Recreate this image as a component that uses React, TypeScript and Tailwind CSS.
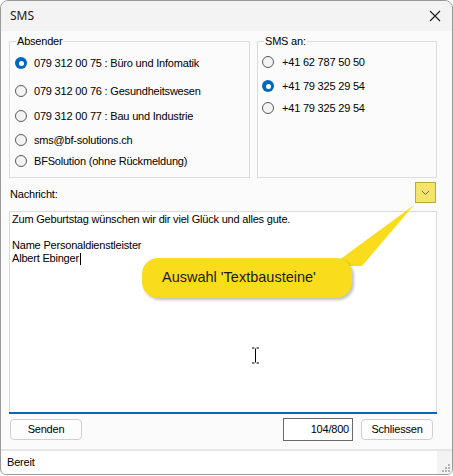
import React from "react";

const F = { fontFamily: '"Liberation Sans", Arial, sans-serif' };

function Radio({ checked }: { checked?: boolean }) {
  if (checked)
    return (
      <span className="w-[12px] h-[12px] rounded-full bg-[#0067c0] flex items-center justify-center shrink-0">
        <span className="w-[5px] h-[5px] rounded-full bg-white" />
      </span>
    );
  return <span className="w-[12px] h-[12px] rounded-full border border-[#5a5a5a] bg-[#f3f3f3] shrink-0 box-border" />;
}

function Item({ label, checked, mt, gap }: { label: string; checked?: boolean; mt: string; gap: string }) {
  return (
    <div className={`h-[20px] flex items-center ${mt} ${gap}`}>
      <Radio checked={checked} />
      <span className="text-[11px] tracking-[-0.2px] text-black whitespace-nowrap">{label}</span>
    </div>
  );
}

export default function App() {
  return (
    <div className="w-[453px] h-[476px] bg-white relative overflow-hidden text-black" style={F}>
      <div className="w-[453px] h-[475px] flex flex-col border border-[#9a9a9a] rounded-t-[8px] rounded-b-[6px] overflow-hidden bg-[#fbfbfb]">
        {/* title bar */}
        <div className="h-[30px] bg-[#f3f3f3] flex items-center justify-between pl-[9px] pr-[10px] shrink-0">
          <span className="text-[12px] text-[#1a1a1a]" style={{ fontFamily: '"Noto Sans", "Open Sans", sans-serif' }}>
            SMS
          </span>
          <svg width="12" height="12" viewBox="0 0 12 12" className="mr-[1px]">
            <path d="M1 1 L11 11 M11 1 L1 11" stroke="#1a1a1a" strokeWidth="1.1" />
          </svg>
        </div>

        {/* body */}
        <div className="flex-1 flex flex-col pl-[8px] pr-[15px]">
          <div className="flex gap-[7px] mt-[4px]">
            <fieldset className="w-[241px] h-[143px] border border-[#dcdcdc] px-[6px]">
              <legend className="px-[1px] text-[11px] leading-[13px] tracking-[-0.2px]">Absender</legend>
              <div className="-ml-[1px] pt-[5px]">
                <Item label="079 312 00 75 : Büro und Infomatik" checked mt="mt-0" gap="gap-[7px]" />
                <Item label="079 312 00 76 : Gesundheitswesen" mt="mt-[8px]" gap="gap-[7px]" />
                <Item label="079 312 00 77 : Bau und Industrie" mt="mt-[5px]" gap="gap-[7px]" />
                <Item label="sms@bf-solutions.ch" mt="mt-[4px]" gap="gap-[7px]" />
                <Item label="BFSolution (ohne Rückmeldung)" mt="mt-[1px]" gap="gap-[7px]" />
              </div>
            </fieldset>
            <fieldset className="w-[180px] h-[143px] border border-[#dcdcdc] px-[6px]">
              <legend className="px-[1px] text-[11px] leading-[13px] tracking-[-0.2px]">SMS an:</legend>
              <div className="-ml-[2px] pt-[4px]">
                <Item label="+41 62 787 50 50" mt="mt-0" gap="gap-[8px]" />
                <Item label="+41 79 325 29 54" checked mt="mt-[4px]" gap="gap-[8px]" />
                <Item label="+41 79 325 29 54" mt="mt-[2px]" gap="gap-[8px]" />
              </div>
            </fieldset>
          </div>

          {/* Nachricht row */}
          <div className="h-[21px] mt-[4px] flex items-center justify-between">
            <span className="text-[11px] tracking-[-0.2px] pt-[3px] pl-[1px]">Nachricht:</span>
            <div className="w-[21px] h-[21px] mr-[1px] border border-[#b8a844] bg-[#f5e46c] flex items-center justify-center">
              <svg width="9" height="6" viewBox="0 0 9 6">
                <path d="M1 1 L4.5 4.5 L8 1" stroke="#6b6b4a" strokeWidth="1" fill="none" />
              </svg>
            </div>
          </div>

          {/* textarea */}
          <div className="mt-[8px] h-[203px] border border-[#dcdcdc] border-b-0 bg-white flex flex-col">
            <div className="flex-1 px-[2px] pt-[1px] text-[11px] leading-[13px] tracking-[-0.2px]">
              <div>Zum Geburtstag wünschen wir dir viel Glück und alles gute.</div>
              <div className="h-[13px]" />
              <div>Name Personaldienstleister</div>
              <div className="flex items-center">
                Albert Ebinger<span className="inline-block w-[1px] h-[12px] bg-black ml-[1px]" />
              </div>
            </div>
            <div className="h-[2px] bg-[#0067c0] -mx-[1px]" />
          </div>

          {/* bottom buttons */}
          <div className="flex items-center mt-[4px] h-[23px]">
            <button className="ml-[1px] w-[72px] h-[21px] rounded-[4px] border border-[#d0d0d0] bg-[#fdfdfd] text-[11px] tracking-[-0.2px]">
              Senden
            </button>
            <div className="ml-auto w-[70px] h-[23px] border border-[#6a6a6a] bg-white flex items-center justify-end pr-[3px] text-[11px] tracking-[-0.2px]">
              104/800
            </div>
            <button className="ml-[8px] mr-[4px] w-[72px] h-[21px] rounded-[4px] border border-[#d0d0d0] bg-[#fdfdfd] text-[11px] tracking-[-0.2px]">
              Schliessen
            </button>
          </div>
        </div>

        {/* status bar */}
        <div className="h-[25px] border-t-[2px] border-[#e6e6e6] flex shrink-0">
          <div className="flex-1 bg-white flex items-center pl-[4px] text-[11px] tracking-[-0.2px] ml-[2px]">Bereit</div>
          <div className="w-[15px] bg-[#f3f3f3] relative">
            <svg width="12" height="12" viewBox="0 0 12 12" className="absolute right-[1px] bottom-[1px]">
              {[
                [9, 1],
                [6, 4],
                [9, 4],
                [3, 7],
                [6, 7],
                [9, 7],
              ].map(([x, y], i) => (
                <rect key={i} x={x} y={y + 2} width="2" height="2" fill="#b4b4b4" />
              ))}
            </svg>
          </div>
        </div>
      </div>

      {/* callout tail */}
      <svg className="absolute left-0 top-0 pointer-events-none" width="453" height="476">
        <polygon points="414,205 331,266 362,266" fill="#f9dd1d" />
      </svg>
      {/* callout bubble */}
      <div className="absolute left-[142px] top-[258px] w-[210px] h-[40px] rounded-[16px] bg-[#f9dd1d] shadow-[2px_2px_3px_rgba(0,0,0,0.25)] flex items-center pl-[20px] text-[14.5px] text-[#1a1a1a]">
        Auswahl 'Textbausteine'
      </div>

      {/* I-beam cursor */}
      <svg className="absolute left-[251px] top-[347px]" width="9" height="17" viewBox="0 0 9 17">
        <path d="M1 1 H3.5 M5.5 1 H8 M4.5 1.5 V15.5 M1 16 H3.5 M5.5 16 H8" stroke="#000" strokeWidth="1" fill="none" />
      </svg>
    </div>
  );
}
